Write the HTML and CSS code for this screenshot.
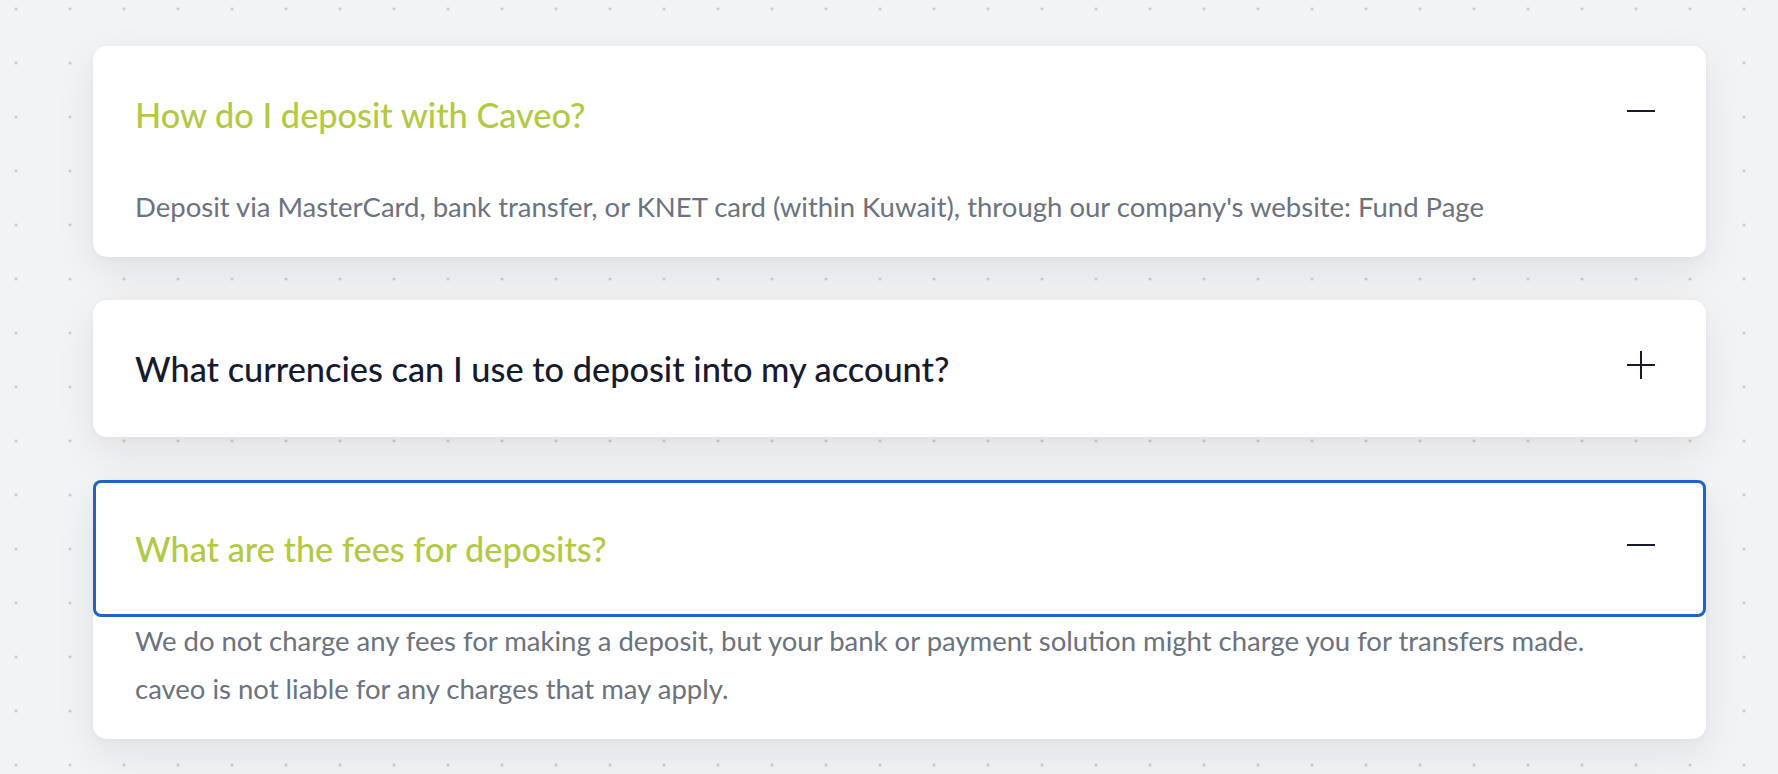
FILE: index.html
```html
<!DOCTYPE html>
<html lang="en">
<head>
  <meta charset="UTF-8" />
  <meta name="viewport" content="width=device-width, initial-scale=1.0" />
  <title>Caveo - Deposit FAQ</title>
  <link rel="stylesheet" href="styles.css">
</head>
<body>
  <div class="faq">
    <div class="faq-item open">
      <button class="faq-question">
        <span>How do I deposit with Caveo?</span>
        <svg class="faq-icon" viewBox="0 0 28 28"><path d="M0 14h28" /></svg>
      </button>
      <div class="faq-answer">
        Deposit via MasterCard, bank transfer, or KNET card (within Kuwait), through our company's website: Fund Page
      </div>
    </div>

    <div class="faq-item">
      <button class="faq-question">
        <span>What currencies can I use to deposit into my account?</span>
        <svg class="faq-icon" viewBox="0 0 28 28"><path d="M0 14h28M14 0v28" /></svg>
      </button>
    </div>

    <div class="faq-item open">
      <button class="faq-question focused">
        <span>What are the fees for deposits?</span>
        <svg class="faq-icon" viewBox="0 0 28 28"><path d="M0 14h28" /></svg>
      </button>
      <div class="faq-answer">
        We do not charge any fees for making a deposit, but your bank or payment solution might charge you for transfers made.<br>
        caveo is not liable for any charges that may apply.
      </div>
    </div>
  </div>
</body>
</html>
```

FILE: styles.css
```css
* { margin:0; padding:0; box-sizing:border-box; }
body {
  font-family:Lato, "Open Sans", sans-serif;
  background-color:#f2f3f5;
  background-image:radial-gradient(circle at 16px 9px, #cbcfd6 1.2px, transparent 1.9px);
  background-size:54px 54px;
  height:100vh; overflow:hidden;
}
.faq {
  display:flex; flex-direction:column; gap:43px;
  width:1613px; margin:46px 0 0 93px;
}
.faq-item {
  background:#fff; border-radius:14px;
  box-shadow:0 14px 40px rgba(17,24,39,0.08), 0 2px 6px rgba(17,24,39,0.03);
}
.faq-question {
  width:100%; height:137px;
  display:flex; align-items:center; justify-content:space-between;
  padding:0 51px 0 42px;
  border:none; background:none; border-radius:14px;
  font-family:inherit; font-size:34.3px; font-weight:500;
  color:#161a2e; text-align:left; cursor:pointer;
}
.faq-item.open .faq-question { color:#b3c944; }
.faq-question.focused {
  border-radius:8px;
  box-shadow:inset 0 0 0 3px #1e64c6;
}
.faq-icon {
  width:28px; height:28px; flex-shrink:0; margin-bottom:8px;
  fill:none; stroke:#161a2e; stroke-width:2;
}
.faq-answer {
  padding:0 42px 26px;
  font-size:27.5px; line-height:48px;
  color:#6b7280;
}
```
